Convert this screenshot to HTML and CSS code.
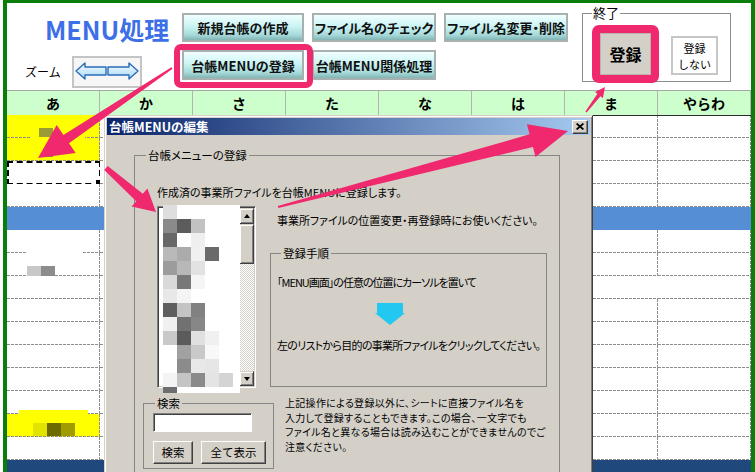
FILE: index.html
```html
<!DOCTYPE html>
<html lang="ja">
<head>
<meta charset="utf-8">
<title>MENU処理</title>
<link rel="stylesheet" href="styles.css">
</head>
<body>
<div class="sheet">
  <header class="toolbar">
    <div class="brand">
      <h1 class="title">MENU処理</h1>
      <div class="zoom">
        <span class="zoom-label">ズーム</span>
        <button class="zoom-btn" type="button" aria-label="ズーム">
          <svg width="66" height="28" viewBox="0 0 66 28">
            <defs>
              <linearGradient id="ag" x1="0" y1="0" x2="0" y2="1">
                <stop offset="0" stop-color="#f4fcff"/>
                <stop offset="1" stop-color="#a9d9f3"/>
              </linearGradient>
            </defs>
            <polygon points="2,13 11,5 11,9 32,9 32,17 11,17 11,21" fill="url(#ag)" stroke="#2a6cb8" stroke-width="1.4" stroke-linejoin="round"/>
            <polygon points="64,13 55,5 55,9 34,9 34,17 55,17 55,21" fill="url(#ag)" stroke="#2a6cb8" stroke-width="1.4" stroke-linejoin="round"/>
          </svg>
        </button>
      </div>
    </div>
    <div class="actions">
      <button class="tbtn" type="button">新規台帳の作成</button>
      <button class="tbtn" type="button">ファイル名のチェック</button>
      <button class="tbtn" type="button">ファイル名変更・削除</button>
      <span class="mark"><button class="tbtn" type="button">台帳MENUの登録</button></span>
      <button class="tbtn" type="button">台帳MENU関係処理</button>
    </div>
    <fieldset class="exit">
      <legend>終了</legend>
      <span class="mark-lg"><button class="save" type="button">登録</button></span>
      <button class="nosave" type="button">登録<br>しない</button>
    </fieldset>
  </header>

  <div class="colhead">
    <div>あ</div><div>か</div><div>さ</div><div>た</div><div>な</div><div>は</div><div>ま</div><div>やらわ</div>
  </div>

  <div class="cells">
    <div class="row top">
      <div class="c y"><i class="blot b-olive"></i><i class="blot b-gapy"></i></div><div class="c"></div><div class="c"></div><div class="c"></div><div class="c"></div><div class="c"></div><div class="c edge"></div><div class="c edge"></div>
    </div>
    <div class="row">
      <div class="c y"><i class="blot b-line"></i></div><div class="c"></div><div class="c"></div><div class="c"></div><div class="c"></div><div class="c"></div><div class="c"></div><div class="c"></div>
    </div>
    <div class="row">
      <div class="c sel"></div><div class="c"></div><div class="c"></div><div class="c"></div><div class="c"></div><div class="c"></div><div class="c"></div><div class="c"></div>
    </div>
    <div class="row">
      <div class="c"></div><div class="c"></div><div class="c"></div><div class="c"></div><div class="c"></div><div class="c"></div><div class="c"></div><div class="c"></div>
    </div>
    <div class="row blue">
      <div class="c"></div><div class="c"></div><div class="c"></div><div class="c"></div><div class="c"></div><div class="c"></div><div class="c"></div><div class="c"></div>
    </div>
    <div class="row">
      <div class="c"></div><div class="c"></div><div class="c"></div><div class="c"></div><div class="c"></div><div class="c"></div><div class="c"></div><div class="c"></div>
    </div>
    <div class="row">
      <div class="c"><i class="blot b-gapw"></i><i class="blot b-g1"></i><i class="blot b-g2"></i></div><div class="c"></div><div class="c"></div><div class="c"></div><div class="c"></div><div class="c"></div><div class="c"></div><div class="c"></div>
    </div>
    <div class="row">
      <div class="c"></div><div class="c"></div><div class="c"></div><div class="c"></div><div class="c"></div><div class="c"></div><div class="c solo"></div><div class="c"></div>
    </div>
    <div class="row">
      <div class="c"></div><div class="c"></div><div class="c"></div><div class="c"></div><div class="c"></div><div class="c"></div><div class="c"></div><div class="c"></div>
    </div>
    <div class="row">
      <div class="c"></div><div class="c"></div><div class="c"></div><div class="c"></div><div class="c"></div><div class="c"></div><div class="c"></div><div class="c"></div>
    </div>
    <div class="row">
      <div class="c"></div><div class="c"></div><div class="c"></div><div class="c"></div><div class="c"></div><div class="c"></div><div class="c"></div><div class="c"></div>
    </div>
    <div class="row">
      <div class="c"></div><div class="c"></div><div class="c"></div><div class="c"></div><div class="c"></div><div class="c"></div><div class="c"></div><div class="c"></div>
    </div>
    <div class="row">
      <div class="c"></div><div class="c"></div><div class="c"></div><div class="c"></div><div class="c"></div><div class="c"></div><div class="c"></div><div class="c"></div>
    </div>
    <div class="row">
      <div class="c y"><i class="blot b-yup"></i><i class="blot b-y1"></i><i class="blot b-y2"></i><i class="blot b-y3"></i></div><div class="c"></div><div class="c"></div><div class="c"></div><div class="c"></div><div class="c"></div><div class="c"></div><div class="c"></div>
    </div>
    <div class="row">
      <div class="c"></div><div class="c"></div><div class="c"></div><div class="c"></div><div class="c"></div><div class="c"></div><div class="c"></div><div class="c"></div>
    </div>
    <div class="row navy">
      <div class="c"></div><div class="c"></div><div class="c"></div><div class="c"></div><div class="c"></div><div class="c"></div><div class="c"></div><div class="c"></div>
    </div>
  </div>
</div>

<section class="dialog" aria-label="台帳MENUの編集">
  <div class="titlebar">
    <span class="dtitle">台帳MENUの編集</span>
    <button class="close" type="button" aria-label="閉じる">
      <svg width="8" height="7" viewBox="0 0 8 7"><path d="M0.6,0.5 L7.4,6.5 M7.4,0.5 L0.6,6.5" stroke="#000" stroke-width="1.7" fill="none"/></svg>
    </button>
  </div>
  <fieldset class="group main">
    <legend>台帳メニューの登録</legend>
    <p class="intro">作成済の事業所ファイルを台帳MENUに登録します。</p>
    <div class="mid">
      <div class="listbox">
        <div class="items"></div>
        <div class="vscroll">
          <span class="sb-btn up"></span>
          <span class="sb-thumb"></span>
          <span class="sb-track"></span>
          <span class="sb-btn down"></span>
        </div>
        <svg class="mosaic" width="77" height="188" viewBox="0 0 77 188" aria-hidden="true">
          <rect x="0" y="0" width="77" height="188" fill="#fff"/>
          <rect x="0" y="0" width="14" height="14" fill="#dedede"/>
          <rect x="0" y="14" width="14" height="14" fill="#8a8a8a"/>
          <rect x="14" y="14" width="14" height="14" fill="#5c5c5c"/>
          <rect x="28" y="14" width="14" height="14" fill="#c2c2c2"/>
          <rect x="0" y="28" width="14" height="14" fill="#686868"/>
          <rect x="28" y="28" width="14" height="14" fill="#efefef"/>
          <rect x="0" y="42" width="14" height="14" fill="#b9b9b9"/>
          <rect x="14" y="42" width="14" height="14" fill="#ababab"/>
          <rect x="28" y="42" width="14" height="14" fill="#f0f0f0"/>
          <rect x="42" y="42" width="14" height="14" fill="#6a6a6a"/>
          <rect x="0" y="56" width="14" height="14" fill="#9c9c9c"/>
          <rect x="14" y="56" width="14" height="14" fill="#b8b8b8"/>
          <rect x="28" y="56" width="14" height="14" fill="#e2e2e2"/>
          <rect x="0" y="70" width="14" height="14" fill="#d9d9d9"/>
          <rect x="14" y="70" width="14" height="14" fill="#787878"/>
          <rect x="28" y="70" width="14" height="14" fill="#f5f5f5"/>
          <rect x="0" y="84" width="14" height="14" fill="#e8e8e8"/>
          <rect x="14" y="84" width="14" height="14" fill="#f4f4f4"/>
          <rect x="0" y="98" width="14" height="14" fill="#5f5f5f"/>
          <rect x="14" y="98" width="14" height="14" fill="#c4c4c4"/>
          <rect x="28" y="98" width="14" height="14" fill="#818181"/>
          <rect x="0" y="112" width="14" height="14" fill="#f0f0f0"/>
          <rect x="14" y="112" width="14" height="14" fill="#717171"/>
          <rect x="28" y="112" width="14" height="14" fill="#878787"/>
          <rect x="0" y="126" width="14" height="14" fill="#c9c9c9"/>
          <rect x="14" y="126" width="14" height="14" fill="#5b5b5b"/>
          <rect x="28" y="126" width="14" height="14" fill="#e0e0e0"/>
          <rect x="42" y="126" width="14" height="14" fill="#f0f0f0"/>
          <rect x="14" y="140" width="14" height="14" fill="#a1a1a1"/>
          <rect x="28" y="140" width="14" height="14" fill="#c9c9c9"/>
          <rect x="42" y="140" width="14" height="14" fill="#f8f8f8"/>
          <rect x="14" y="154" width="14" height="14" fill="#8b8b8b"/>
          <rect x="28" y="154" width="14" height="14" fill="#e8e8e8"/>
          <rect x="42" y="154" width="14" height="14" fill="#e6e6e6"/>
          <rect x="0" y="168" width="14" height="14" fill="#f4f4f4"/>
          <rect x="14" y="168" width="14" height="14" fill="#c4c4c4"/>
          <rect x="28" y="168" width="14" height="14" fill="#8a8a8a"/>
          <rect x="42" y="168" width="14" height="14" fill="#e4e4e4"/>
          <rect x="56" y="168" width="14" height="14" fill="#d4d4d4"/>
          <rect x="0" y="182" width="14" height="6" fill="#6e6e6e"/>
        </svg>
      </div>
      <div class="side">
        <p class="note">事業所ファイルの位置変更・再登録時にお使いください。</p>
        <fieldset class="group steps">
          <legend>登録手順</legend>
          <p class="step1">「MENU画面」の任意の位置にカーソルを置いて</p>
          <svg class="down-arrow" width="30" height="22" viewBox="0 0 30 22" aria-hidden="true">
            <polygon points="2,0 28,0 28,10 30,10 15,22 0,10 2,10" fill="#22c8f0"/>
          </svg>
          <p class="step2">左のリストから目的の事業所ファイルをクリックしてください。</p>
        </fieldset>
      </div>
    </div>
    <div class="bottom">
      <fieldset class="group search">
        <legend>検索</legend>
        <input class="search-input" type="text" aria-label="検索">
        <div class="search-btns">
          <button class="wbtn b-find" type="button">検索</button>
          <button class="wbtn b-all" type="button">全て表示</button>
        </div>
      </fieldset>
      <p class="hint">上記操作による登録以外に、シートに直接ファイル名を<br>入力して登録することもできます。この場合、一文字でも<br>ファイル名と異なる場合は読み込むことができませんのでご<br>注意ください。</p>
    </div>
  </fieldset>
</section>

<svg class="arrows" width="755" height="472" viewBox="0 0 755 472" aria-hidden="true">
  <g fill="#f0286e">
    <polygon points="171.4,67.2 63.4,134.9 56.7,124.9 38,158 75.7,153.1 69,143.2 172.6,68.8"/>
    <polygon points="104.3,169.9 136.2,201.3 131.6,206.5 156,212 147.4,188.5 142.8,193.7 107.7,166.1"/>
    <polygon points="278.3,208 532.9,146.9 535.5,157 568,131 526.9,124.2 529.6,134.3 277.8,206"/>
    <polygon points="586.6,112.5 600.5,96.2 602.9,98 605,87 595,91.9 597.4,93.8 585.4,111.5"/>
  </g>
</svg>
</body>
</html>
```

FILE: styles.css
```css
* { box-sizing: border-box; }
html, body { margin: 0; padding: 0; }
body {
  width: 755px;
  height: 472px;
  overflow: hidden;
  position: relative;
  background: #fff;
  font-family: "Noto Sans CJK JP", sans-serif;
  color: #000;
}
p { margin: 0; }
button { font-family: "Noto Sans CJK JP", sans-serif; color: #000; cursor: default; }

/* ---------- sheet frame ---------- */
.sheet {
  margin-left: 3px;
  height: 472px;
  border-top: 3px solid #0b7d0b;
  border-left: 4px solid #0b7d0b;
  border-right: 4px solid #0b7d0b;
  overflow: hidden;
  background: #fff;
}

/* ---------- toolbar ---------- */
.toolbar {
  display: flex;
  align-items: flex-start;
  height: 87px;
}
.brand { width: 175px; flex: none; }
.title {
  margin: 13px 0 0 38px;
  font-size: 25px;
  line-height: 26px;
  font-weight: 700;
  color: #3d6fe8;
  white-space: nowrap;
}
.zoom {
  display: flex;
  align-items: center;
  margin-top: 14px;
}
.zoom-label {
  margin-left: 18px;
  width: 47px;
  font-size: 12px;
  line-height: 14px;
}
.zoom-btn {
  width: 70px;
  height: 32px;
  padding: 0;
  border: 2px solid #c4c4c4;
  background: #f6f6f6;
  display: flex;
  align-items: center;
  justify-content: center;
}

.actions {
  display: grid;
  grid-template-columns: 122px 124px 124px;
  grid-template-rows: 29px 30px;
  column-gap: 8px;
  row-gap: 8px;
  margin-top: 10px;
  flex: none;
}
.tbtn {
  font-size: 13px;
  font-weight: 700;
  line-height: 1;
  font-feature-settings: "palt" 1;
  border: 2px solid #a9b0b0;
  background: linear-gradient(#f2ffff, #cbf4f4 45%, #a6d9d9 80%, #82b4b4);
  padding: 0;
  color: #111;
  white-space: nowrap;
}
.mark { position: relative; display: flex; }
.mark > .tbtn { flex: 1; }
.mark::after {
  content: "";
  position: absolute;
  left: -8px; right: -9px; top: -6px; bottom: -8px;
  border: 6px solid #f0286e;
  border-radius: 7px;
  pointer-events: none;
}

.exit {
  margin: 3px 0 0 14px;
  width: 149px;
  height: 76px;
  padding: 5px 0 0 9px;
  border: 1px solid #8c8c8c;
  display: flex;
  align-items: flex-start;
  flex: none;
  min-width: 0;
}
.exit legend {
  padding: 0 1px;
  font-size: 13px;
  line-height: 14px;
}
.mark-lg {
  display: block;
  width: 67px;
  height: 58px;
  border: 8px solid #f0286e;
  border-radius: 7px;
}
.save {
  display: block;
  width: 51px;
  height: 42px;
  padding: 0;
  border: 1px solid #b8b4ac;
  background: #d4d0c8;
  font-size: 16px;
  font-weight: 700;
  line-height: 1;
}
.nosave {
  margin: 11px 0 0 12px;
  width: 47px;
  height: 39px;
  padding: 0;
  border: 2px solid #c6c6c6;
  background: #fff;
  font-size: 11px;
  line-height: 16px;
}

/* ---------- column header ---------- */
.colhead {
  display: grid;
  grid-template-columns: repeat(8, 93px);
  height: 25px;
  background: #ccffcc;
  border-top: 1px solid #a6a6a6;
}
.colhead div {
  border-right: 1px solid #b4b4b4;
  text-align: center;
  font-size: 14px;
  font-weight: 700;
  line-height: 24px;
}

/* ---------- cells ---------- */
.row {
  display: grid;
  grid-template-columns: repeat(8, 93px);
  height: 23px;
}
.c {
  position: relative;
  background-color: #fff;
  background-image:
    repeating-linear-gradient(90deg, #8c8c8c 0 3px, transparent 3px 4px),
    repeating-linear-gradient(180deg, #8c8c8c 0 3px, transparent 3px 4px);
  background-size: 100% 1px, 1px 100%;
  background-position: left bottom, right top;
  background-repeat: no-repeat;
}
.c.y { background-color: #ffff00; }
.c.solo { background-size: 100% 1px, 0 0; }
.row.top .c.edge { box-shadow: inset 0 1px #2a2a2a; }
.row.blue .c { background: #558ed5; }
.row.navy .c { background: #1f497d; }
.c.sel { background-image: none; }
.c.sel::before {
  content: "";
  position: absolute;
  left: 0; top: 0; right: -1px; bottom: -1px;
  border: 2px dashed #000;
}
.c.sel::after {
  content: "";
  position: absolute;
  right: -3px; bottom: -3px;
  width: 6px; height: 6px;
  background: #000;
  border: 1px solid #fff;
}

.blot { position: absolute; display: block; }
.b-olive { left: 32px; top: 13px; width: 14px; height: 15px; background: #9b9b35; }
.b-gapy { left: 23px; bottom: 0; width: 55px; height: 1px; background: #ffff00; }
.b-line { left: 33px; top: 17px; width: 13px; height: 2px; background: #8a8a2a; }
.b-gapw { left: 20px; top: -1px; width: 55px; height: 2px; background: #fff; }
.b-g1 { left: 20px; top: 13px; width: 14px; height: 10px; background: #c8c8c8; }
.b-g2 { left: 34px; top: 13px; width: 14px; height: 10px; background: #8c8c8c; }
.b-yup { left: 12px; top: -4px; width: 69px; height: 5px; background: #ffff00; }
.b-y1 { left: 26px; top: 9px; width: 14px; height: 13px; background: #e3e300; }
.b-y2 { left: 40px; top: 9px; width: 14px; height: 13px; background: #6b6b00; }
.b-y3 { left: 54px; top: 9px; width: 14px; height: 13px; background: #a09c00; }

/* ---------- dialog window ---------- */
.dialog {
  position: absolute;
  left: 104px;
  top: 115px;
  width: 489px;
  height: 372px;
  background: #d4d0c8;
  border: 1px solid;
  border-color: #d4d0c8 #404040 #404040 #d4d0c8;
  box-shadow: inset 1px 1px #fff, inset -1px -1px #808080;
  padding: 2px;
  font-size: 11px;
  font-feature-settings: "palt" 1;
}
.titlebar {
  height: 17px;
  display: flex;
  align-items: center;
  justify-content: space-between;
  padding: 0 2px 0 2px;
  background: linear-gradient(90deg, #0a246a, #a6caf0);
}
.dtitle {
  color: #fff;
  font-weight: 700;
  font-size: 12.5px;
  line-height: 17px;
  font-feature-settings: normal;
  white-space: nowrap;
}
.close {
  width: 16px;
  height: 14px;
  padding: 0;
  background: #d4d0c8;
  border: 1px solid;
  border-color: #fff #404040 #404040 #fff;
  box-shadow: inset -1px -1px #808080;
  display: flex;
  align-items: center;
  justify-content: center;
}

.group {
  margin: 0;
  border: 1px solid #868686;
  min-width: 0;
}
.group legend {
  padding: 0 2px;
  line-height: 14px;
  font-size: 11.5px;
  white-space: nowrap;
}
.main {
  margin: 13px 0 0 27px;
  width: 426px;
  height: 340px;
  padding: 0 0 0 8px;
}
.main > legend { margin-left: 3px; }
.intro {
  margin: 23px 0 0 14px;
  line-height: 14px;
  white-space: nowrap;
}
.mid {
  display: flex;
  align-items: flex-start;
  margin: 7px 0 0 14px;
}

.listbox {
  position: relative;
  flex: none;
  width: 99px;
  height: 182px;
  display: flex;
  padding: 1px;
  background: #fff;
  border: 1px solid;
  border-color: #808080 #fff #fff #808080;
  box-shadow: inset 1px 1px #404040, inset -1px -1px #d4d0c8;
}
.items { flex: 1; }
.vscroll {
  width: 15px;
  display: flex;
  flex-direction: column;
}
.sb-btn, .sb-thumb {
  display: flex;
  align-items: center;
  justify-content: center;
  background: #d4d0c8;
  border: 1px solid;
  border-color: #d4d0c8 #404040 #404040 #d4d0c8;
  box-shadow: inset 1px 1px #fff, inset -1px -1px #808080;
}
.sb-btn { height: 16px; }
.sb-btn.down { height: 15px; }
.sb-thumb { height: 40px; }
.sb-track {
  flex: 1;
  background: repeating-conic-gradient(#d4d0c8 0 25%, #ffffff 0 50%) 0 0 / 2px 2px;
}
.sb-btn::before {
  content: "";
  width: 0; height: 0;
  border-left: 3.5px solid transparent;
  border-right: 3.5px solid transparent;
}
.sb-btn.up::before { border-bottom: 4px solid #000; }
.sb-btn.down::before { border-top: 4px solid #000; }
.mosaic {
  position: absolute;
  left: 5px;
  top: -2px;
}

.side {
  margin-left: 14px;
  width: 277px;
  flex: none;
}
.note {
  margin: 7px 0 0 7px;
  line-height: 14px;
  letter-spacing: -0.05px;
  white-space: nowrap;
}
.steps {
  margin-top: 19px;
  width: 277px;
  height: 141px;
  padding: 0 0 0 6px;
}
.steps > legend { margin-left: 4px; }
.step1 {
  margin-top: 15px;
  line-height: 14px;
  letter-spacing: -1px;
  white-space: nowrap;
}
.down-arrow {
  display: block;
  margin: 14px 0 0 98px;
}
.step2 {
  margin-top: 13px;
  line-height: 14px;
  letter-spacing: -0.7px;
  white-space: nowrap;
}

.bottom {
  display: flex;
  align-items: flex-start;
  margin-top: 8px;
}
.search {
  width: 131px;
  height: 73px;
  padding: 0 0 0 9px;
  flex: none;
}
.search > legend { margin-left: 2px; }
.search-input {
  display: block;
  width: 99px;
  height: 19px;
  margin: 3px 0 0;
  padding: 0;
  background: #fff;
  border: 1px solid;
  border-color: #808080 #fff #fff #808080;
  box-shadow: inset 1px 1px #404040;
}
.search-btns {
  display: flex;
  gap: 8px;
  margin-top: 9px;
}
.wbtn {
  height: 23px;
  padding: 0;
  font-size: 11.5px;
  line-height: 1;
  background: #d4d0c8;
  border: 1px solid;
  border-color: #fff #404040 #404040 #fff;
  box-shadow: inset -1px -1px #808080;
}
.b-find { width: 40px; }
.b-all { width: 65px; }
.hint {
  margin: 0 0 0 11px;
  font-size: 10px;
  line-height: 14.5px;
  letter-spacing: 0.3px;
  white-space: nowrap;
}

/* ---------- annotation arrows ---------- */
.arrows {
  position: absolute;
  left: 0;
  top: 0;
  pointer-events: none;
}
```
